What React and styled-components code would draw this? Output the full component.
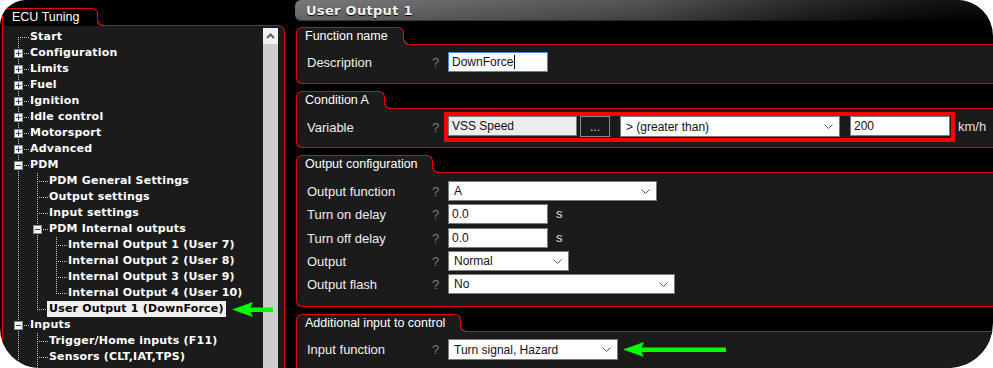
import React from "react";
import styled, { createGlobalStyle } from "styled-components";

const RED = "#ee0000";
const PANEL = "#1b1b1b";
const UI = `"Liberation Sans", Arial, sans-serif`;
const BOLD = `"DejaVu Sans", Verdana, sans-serif`;

const Global = createGlobalStyle`
  html, body { margin: 0; padding: 0; background: #fff; }
  body { font-family: ${UI}; }
`;

const Screen = styled.div`
  width: 993px;
  height: 368px;
  background: #000;
  overflow: hidden;
  border-radius: 26px 36px 45px 40px;
  display: flex;
  align-items: stretch;
`;

/* ---------- generic tab + panel ---------- */
const TabRow = styled.div`
  display: flex;
`;

const Tab = styled.div`
  position: relative;
  z-index: 1;
  height: 18px;
  box-sizing: border-box;
  margin-bottom: -1px;
  padding: 0 ${(p) => p.$pr}px 0 ${(p) => p.$pl}px;
  border: 1px solid ${RED};
  border-bottom: none;
  border-radius: 6px 6px 0 0;
  background: ${(p) => p.$bg || PANEL};
  color: #fff;
  font: 12.5px/16px ${UI};
  white-space: nowrap;
  &::after {
    content: "";
    position: absolute;
    left: 100%;
    bottom: 0;
    width: 7px;
    height: 7px;
    background: radial-gradient(
      circle at 100% 0,
      #000 5.7px,
      ${RED} 6.1px,
      ${RED} 6.9px,
      ${PANEL} 7.3px
    );
  }
`;

/* ---------- left tree ---------- */
const LeftCol = styled.div`
  flex: 0 0 286px;
  box-sizing: border-box;
  padding: 8px 0 0 2px;
  display: flex;
  flex-direction: column;
`;

const TreePanel = styled.div`
  width: 283px;
  flex: 1;
  box-sizing: border-box;
  border: 1px solid ${RED};
  border-bottom: none;
  border-radius: 0 7px 0 0;
  background: ${PANEL};
  display: flex;
  min-height: 0;
`;

const Tree = styled.div`
  flex: 1;
  min-width: 0;
  position: relative;
  z-index: 1;
  padding: 3px 0 0 11px;
`;

const TreeRow = styled.div`
  display: flex;
  align-items: center;
  height: 16px;
  white-space: nowrap;
`;

const LinesSvg = styled.svg`
  display: block;
  flex: none;
  shape-rendering: crispEdges;
`;

const NodeText = styled.span`
  font-family: ${BOLD};
  font-weight: bold;
  font-size: 11px;
  letter-spacing: 0.2px;
  line-height: 16px;
  height: 16px;
  color: ${(p) => (p.$sel ? "#000" : "#fff")};
  background: ${(p) => (p.$sel ? "#efefef" : "transparent")};
  padding: 0 ${(p) => (p.$sel ? 2 : 0)}px;
  margin-left: ${(p) => (p.$sel ? -2 : 0)}px;
`;

const Scrollbar = styled.div`
  width: 15px;
  flex: none;
  margin: 2px 6px 0 0;
  display: flex;
  flex-direction: column;
  background: #cdcdcd;
`;

const ScrollButton = styled.div`
  height: 16px;
  background: #f0f0f0;
  display: flex;
  align-items: center;
  justify-content: center;
`;

const ArrowSvg = styled.svg`
  display: block;
  flex: none;
  margin-left: ${(p) => p.$ml}px;
`;

/* ---------- right side ---------- */
const RightCol = styled.div`
  flex: 0 0 740px;
  margin-left: 9px;
  display: flex;
  flex-direction: column;
  gap: 7px;
`;

const Header = styled.div`
  height: 21px;
  flex: none;
  margin-bottom: -1px;
  box-sizing: border-box;
  padding-left: 11px;
  border-radius: 6px 0 0 6px;
  background: linear-gradient(
      to bottom,
      rgba(255, 255, 255, 0.07),
      rgba(0, 0, 0, 0.12)
    ),
    linear-gradient(
      to right,
      #707070 0px,
      #484848 345px,
      #1d1d1d 505px,
      #060606 620px,
      #000 700px
    );
  box-shadow: inset 0 -1px rgba(0, 0, 0, 0.35);
  color: #f2f2f2;
  font: bold 13px/21px ${BOLD};
  letter-spacing: 0.3px;
  text-shadow: 0 1px 1px #000;
`;

const Section = styled.section`
  display: flex;
  flex-direction: column;
  margin-left: 1px;
  flex: none;
`;

const Body = styled.div`
  background: ${PANEL};
  border: 1px solid ${RED};
  border-right: none;
  border-radius: 0 0 0 6px;
  padding: ${(p) => p.$pt}px 0 ${(p) => p.$pb}px 10px;
  display: flex;
  flex-direction: column;
  gap: 3px;
`;

const Row = styled.div`
  display: grid;
  grid-template-columns: 125px 16px auto;
  align-items: center;
  min-height: 20px;
  margin-top: ${(p) => p.$mt || 0}px;
`;

const Label = styled.span`
  font: 13px/16px ${UI};
  color: #eeeeee;
  white-space: nowrap;
  padding-top: 1px;
`;

const Help = styled.span`
  font: 13px/16px ${UI};
  color: #7a7a7a;
  padding-top: 1px;
`;

const Controls = styled.div`
  display: flex;
  align-items: center;
`;

const TextBox = styled.div`
  width: ${(p) => p.$w}px;
  height: ${(p) => p.$h || 20}px;
  box-sizing: border-box;
  border: 1px solid ${(p) => (p.$focus ? "#3b8be0" : "#7a7a7a")};
  background: ${(p) => p.$bg || "#fff"};
  padding: 0 3px;
  display: flex;
  align-items: center;
  font: 12px/16px ${UI};
  color: #111;
  white-space: nowrap;
`;

const Caret = styled.span`
  width: 1px;
  height: 14px;
  background: #000;
  margin-left: 1px;
`;

const SelectBox = styled.div`
  width: ${(p) => p.$w}px;
  height: ${(p) => p.$h || 20}px;
  box-sizing: border-box;
  border: 1px solid #7a7a7a;
  background: #fff;
  padding: 0 6px 0 5px;
  display: flex;
  align-items: center;
  justify-content: space-between;
  font: 12px/16px ${UI};
  color: #141020;
  white-space: nowrap;
`;

const DotsButton = styled.div`
  width: 30px;
  height: 21px;
  box-sizing: border-box;
  border: 1px solid #8a8a8a;
  background: ${PANEL};
  color: #cfcfcf;
  font: 12px/20px ${UI};
  text-align: center;
  margin: 0 10px 0 3px;
`;

const Highlight = styled.div`
  margin-left: -4px;
  border: 4px solid #ff0000;
  padding: 0 1px 1px 0;
  display: flex;
  align-items: flex-start;
`;

const Gap = styled.div`
  width: ${(p) => p.$w}px;
  flex: none;
`;

const Unit = styled.span`
  font: 13px/16px ${UI};
  color: #e0e0e0;
  margin-left: ${(p) => p.$ml}px;
`;

/* ---------- drawings ---------- */
function TreeLines({ level, guides = [], first, last, box }) {
  const w = 19 * level + 16;
  const dots = [];
  const vline = (x, y0, y1, k) => {
    for (let y = y0; y <= y1; y += 2)
      dots.push(<rect key={`${k}-${y}`} x={x} y={y} width="1" height="1" />);
  };
  guides.forEach((g, i) => g && vline(4 + 19 * i, 0, 15, "g" + i));
  const cx = 4 + 19 * level;
  vline(cx, first ? 8 : 0, last ? 8 : 15, "c");
  for (let x = cx + 2; x <= cx + 11; x += 2)
    dots.push(<rect key={"h" + x} x={x} y={8} width="1" height="1" />);
  return (
    <LinesSvg width={w} height={16} viewBox={`0 0 ${w} 16`}>
      <g fill="#c9c9c9">{dots}</g>
      {box && (
        <g>
          <rect x={cx - 3.5} y={4.5} width={8} height={8} fill="#f3f3f3" stroke="#8e8e8e" />
          <rect x={cx - 2} y={8} width={5} height={1} fill="#2848a8" />
          {box === "+" && <rect x={cx} y={6} width={1} height={5} fill="#2848a8" />}
        </g>
      )}
    </LinesSvg>
  );
}

function Chevron() {
  return (
    <svg width="9" height="5" viewBox="0 0 9 5">
      <polyline points="0.5,0.5 4.5,4.5 8.5,0.5" fill="none" stroke="#555" strokeWidth="1" />
    </svg>
  );
}

function GreenArrow({ w, ml }) {
  return (
    <ArrowSvg $ml={ml} width={w} height={15} viewBox={`0 0 ${w} 15`}>
      <polygon
        points={`0,7.5 21,0 18.5,5.5 ${w},5.5 ${w},10 18.5,10 21,15`}
        fill="#00ff00"
      />
    </ArrowSvg>
  );
}

const treeItems = [
  { t: "Start", l: 0, first: true },
  { t: "Configuration", l: 0, box: "+" },
  { t: "Limits", l: 0, box: "+" },
  { t: "Fuel", l: 0, box: "+" },
  { t: "Ignition", l: 0, box: "+" },
  { t: "Idle control", l: 0, box: "+" },
  { t: "Motorsport", l: 0, box: "+" },
  { t: "Advanced", l: 0, box: "+" },
  { t: "PDM", l: 0, box: "-" },
  { t: "PDM General Settings", l: 1, g: [1] },
  { t: "Output settings", l: 1, g: [1] },
  { t: "Input settings", l: 1, g: [1] },
  { t: "PDM Internal outputs", l: 1, g: [1], box: "-" },
  { t: "Internal Output 1 (User 7)", l: 2, g: [1, 1] },
  { t: "Internal Output 2 (User 8)", l: 2, g: [1, 1] },
  { t: "Internal Output 3 (User 9)", l: 2, g: [1, 1] },
  { t: "Internal Output 4 (User 10)", l: 2, g: [1, 1], last: true },
  { t: "User Output 1 (DownForce)", l: 1, g: [1], last: true, sel: true },
  { t: "Inputs", l: 0, box: "-" },
  { t: "Trigger/Home inputs (F11)", l: 1, g: [1] },
  { t: "Sensors (CLT,IAT,TPS)", l: 1, g: [1] },
  { t: "Digital inputs", l: 1, g: [1] },
];

export default function App() {
  return (
    <>
      <Global />
      <Screen>
        <LeftCol>
          <TabRow>
            <Tab $pl={9} $pr={18} $bg="#000">ECU Tuning</Tab>
          </TabRow>
          <TreePanel>
            <Tree>
              {treeItems.map((it) => (
                <TreeRow key={it.t}>
                  <TreeLines
                    level={it.l}
                    guides={it.g}
                    first={it.first}
                    last={it.last}
                    box={it.box}
                  />
                  <NodeText $sel={it.sel}>{it.t}</NodeText>
                  {it.sel && <GreenArrow w={41} ml={6} />}
                </TreeRow>
              ))}
            </Tree>
            <Scrollbar>
              <ScrollButton>
                <svg width="9" height="6" viewBox="0 0 9 6">
                  <polyline
                    points="1,5 4.5,1.5 8,5"
                    fill="none"
                    stroke="#606060"
                    strokeWidth="2"
                  />
                </svg>
              </ScrollButton>
            </Scrollbar>
          </TreePanel>
        </LeftCol>

        <RightCol>
          <Header>User Output 1</Header>

          <Section>
            <TabRow>
              <Tab $pl={8} $pr={15}>Function name</Tab>
            </TabRow>
            <Body $pt={7} $pb={11}>
              <Row>
                <Label>Description</Label>
                <Help>?</Help>
                <Controls>
                  <TextBox $w={100} $focus>
                    DownForce
                    <Caret />
                  </TextBox>
                </Controls>
              </Row>
            </Body>
          </Section>

          <Section>
            <TabRow>
              <Tab $pl={8} $pr={15}>Condition A</Tab>
            </TabRow>
            <Body $pt={3} $pb={5}>
              <Row>
                <Label>Variable</Label>
                <Help>?</Help>
                <Controls>
                  <Highlight>
                    <TextBox $w={129} $bg="#ececec">VSS Speed</TextBox>
                    <DotsButton>...</DotsButton>
                    <SelectBox $w={220} $h={21}>
                      &gt; (greater than)
                      <Chevron />
                    </SelectBox>
                    <Gap $w={10} />
                    <TextBox $w={100}>200</TextBox>
                  </Highlight>
                  <Unit $ml={3}>km/h</Unit>
                </Controls>
              </Row>
            </Body>
          </Section>

          <Section>
            <TabRow>
              <Tab $pl={8} $pr={14}>Output configuration</Tab>
            </TabRow>
            <Body $pt={8} $pb={12}>
              <Row>
                <Label>Output function</Label>
                <Help>?</Help>
                <Controls>
                  <SelectBox $w={209}>
                    A
                    <Chevron />
                  </SelectBox>
                </Controls>
              </Row>
              <Row>
                <Label>Turn on delay</Label>
                <Help>?</Help>
                <Controls>
                  <TextBox $w={100}>0.0</TextBox>
                  <Unit $ml={8}>s</Unit>
                </Controls>
              </Row>
              <Row $mt={1}>
                <Label>Turn off delay</Label>
                <Help>?</Help>
                <Controls>
                  <TextBox $w={100}>0.0</TextBox>
                  <Unit $ml={8}>s</Unit>
                </Controls>
              </Row>
              <Row>
                <Label>Output</Label>
                <Help>?</Help>
                <Controls>
                  <SelectBox $w={121}>
                    Normal
                    <Chevron />
                  </SelectBox>
                </Controls>
              </Row>
              <Row>
                <Label>Output flash</Label>
                <Help>?</Help>
                <Controls>
                  <SelectBox $w={227}>
                    No
                    <Chevron />
                  </SelectBox>
                </Controls>
              </Row>
            </Body>
          </Section>

          <Section>
            <TabRow>
              <Tab $pl={8} $pr={15}>Additional input to control</Tab>
            </TabRow>
            <Body $pt={7} $pb={12}>
              <Row>
                <Label>Input function</Label>
                <Help>?</Help>
                <Controls>
                  <SelectBox $w={170} $h={21}>
                    Turn signal, Hazard
                    <Chevron />
                  </SelectBox>
                  <GreenArrow w={103} ml={5} />
                </Controls>
              </Row>
            </Body>
          </Section>
        </RightCol>
      </Screen>
    </>
  );
}
